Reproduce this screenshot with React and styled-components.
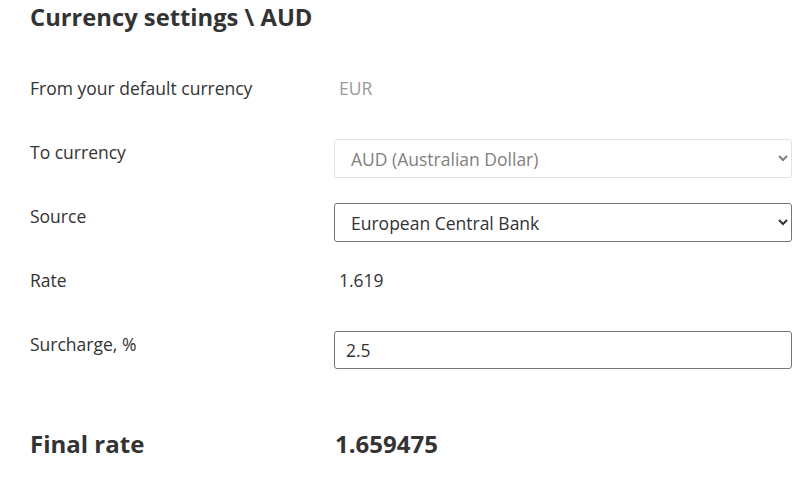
import React from "react";
import styled, { createGlobalStyle } from "styled-components";

const GlobalStyle = createGlobalStyle`
  body {
    margin: 0;
    background: #fff;
    font-family: "Open Sans", "Liberation Sans", sans-serif;
    color: #333;
  }
`;

const Page = styled.div`
  padding: 2px 10px 0 30px;
`;

const Title = styled.h1`
  margin: 0 0 43px;
  font-size: 23.75px;
  line-height: 30px;
  font-weight: 700;
  color: #333;
`;

const Row = styled.div`
  display: grid;
  grid-template-columns: 304px 1fr;
  align-items: start;
  min-height: 64px;
`;

const Label = styled.div`
  font-size: 17.5px;
  line-height: 24px;
  padding-top: 1px;
`;

const Value = styled.div`
  font-size: 17.5px;
  line-height: 24px;
  padding: 1px 0 0 5px;
  color: ${(p) => (p.$muted ? "#999" : "#333")};
`;

const Select = styled.select`
  width: 100%;
  height: 39px;
  box-sizing: border-box;
  font-family: inherit;
  font-size: 17.5px;
  padding: 0 12px;
  border-radius: 3px;
  border: 1px solid #767676;
  color: #333;
  background: #fff;

  &:disabled {
    border-color: #e2e2e2;
    color: #808080;
    opacity: 1;
  }

  option {
    color: inherit;
  }
`;

const Input = styled.input`
  width: 100%;
  height: 38px;
  box-sizing: border-box;
  font-family: inherit;
  font-size: 17.5px;
  padding: 0 11px;
  border-radius: 3px;
  border: 1px solid #767676;
  color: #333;
  background: #fff;
`;

const FinalRow = styled.div`
  display: grid;
  grid-template-columns: 305px 1fr;
  margin-top: 37px;
  font-size: 24px;
  line-height: 24px;
  font-weight: 700;
  color: #333;
`;

const App = () => {
  return (
    <Page>
      <GlobalStyle />
      <Title>Currency settings \ AUD</Title>
      <Row>
        <Label>From your default currency</Label>
        <Value $muted>EUR</Value>
      </Row>
      <Row>
        <Label>To currency</Label>
        <Select disabled defaultValue="AUD">
          <option value="AUD">AUD (Australian Dollar)</option>
        </Select>
      </Row>
      <Row>
        <Label>Source</Label>
        <Select defaultValue="ecb">
          <option value="ecb">European Central Bank</option>
        </Select>
      </Row>
      <Row>
        <Label>Rate</Label>
        <Value>1.619</Value>
      </Row>
      <Row>
        <Label>Surcharge, %</Label>
        <Input defaultValue="2.5" />
      </Row>
      <FinalRow>
        <div>Final rate</div>
        <div>1.659475</div>
      </FinalRow>
    </Page>
  );
};

export default App;
